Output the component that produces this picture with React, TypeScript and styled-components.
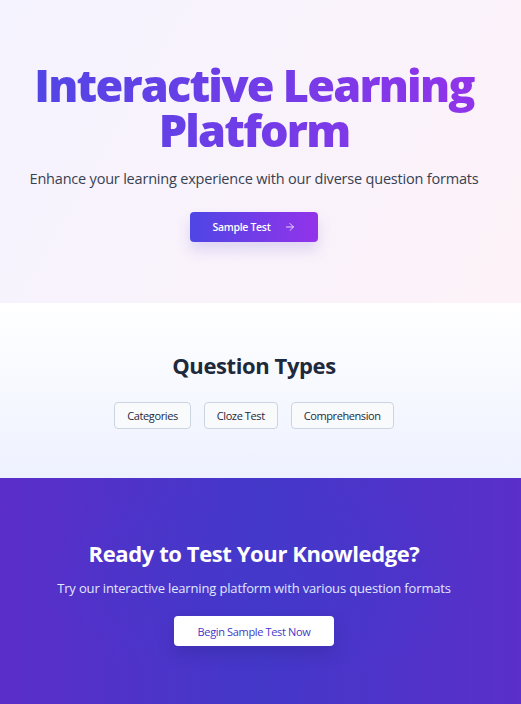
import React from "react";
import styled, { createGlobalStyle } from "styled-components";

const GlobalStyle = createGlobalStyle`
  * { box-sizing: border-box; }
  body {
    margin: 0;
    font-family: "Open Sans", "Noto Sans", sans-serif;
  }
`;

const QUESTION_TYPES = ["Categories", "Cloze Test", "Comprehension"];

const ArrowIcon = () => (
  <svg width="12" height="12" viewBox="0 0 24 24" fill="none" stroke="currentColor" strokeWidth="2" strokeLinecap="round" strokeLinejoin="round">
    <path d="M5 12h14" />
    <path d="m12 5 7 7-7 7" />
  </svg>
);

const App: React.FC = () => {
  return (
    <Page>
      <GlobalStyle />
      <Hero>
        <Title>Interactive Learning Platform</Title>
        <Lead>Enhance your learning experience with our diverse question formats</Lead>
        <PrimaryButton>
          Sample Test
          <ArrowIcon />
        </PrimaryButton>
      </Hero>
      <Types>
        <SectionTitle>Question Types</SectionTitle>
        <PillRow>
          {QUESTION_TYPES.map((t) => (
            <Pill key={t}>{t}</Pill>
          ))}
        </PillRow>
      </Types>
      <Cta>
        <CtaTitle>Ready to Test Your Knowledge?</CtaTitle>
        <CtaText>Try our interactive learning platform with various question formats</CtaText>
        <WhiteButton>Begin Sample Test Now</WhiteButton>
      </Cta>
    </Page>
  );
};

export default App;

const Page = styled.div`
  width: 100%;
  min-height: 704px;
  display: flex;
  flex-direction: column;
`;

// content is centred on the 508px left of where the scrollbar sat
const Section = styled.section`
  display: flex;
  flex-direction: column;
  align-items: center;
  padding-right: 13px;
`;

const Hero = styled(Section)`
  height: 303px;
  padding-top: 62px;
  background: linear-gradient(120deg, #f5f3ff 0%, #fdf2f8 100%);
`;

const Title = styled.h1`
  margin: 0;
  width: 480px;
  text-align: center;
  font-size: 45px;
  line-height: 45px;
  font-weight: 800;
  letter-spacing: -1.8px;
  background: linear-gradient(90deg, #4f46e5 0%, #9333ea 100%);
  -webkit-background-clip: text;
  background-clip: text;
  color: transparent;
`;

const Lead = styled.p`
  margin: 15px 0 0;
  font-size: 14.5px;
  line-height: 24px;
  letter-spacing: -0.2px;
  color: #374151;
`;

const PrimaryButton = styled.button`
  margin-top: 21px;
  width: 128px;
  height: 30px;
  display: flex;
  align-items: center;
  justify-content: center;
  gap: 13px;
  border: none;
  border-radius: 4px;
  font-family: inherit;
  font-size: 10.5px;
  font-weight: 600;
  letter-spacing: -0.3px;
  color: #ffffff;
  background: linear-gradient(90deg, #4f46e5 0%, #9333ea 100%);
  box-shadow: 0 8px 14px rgba(99, 80, 200, 0.18);

  svg {
    opacity: 0.8;
  }
`;

const Types = styled(Section)`
  height: 175px;
  padding-top: 47px;
  background: linear-gradient(180deg, #ffffff 0%, #eef2ff 100%);
`;

const SectionTitle = styled.h2`
  margin: 0;
  font-size: 22px;
  line-height: 30px;
  font-weight: 700;
  letter-spacing: -0.4px;
  color: #1e293b;
`;

const PillRow = styled.div`
  margin-top: 22px;
  display: flex;
  gap: 13px;
`;

const Pill = styled.span`
  height: 27px;
  padding: 0 12px;
  display: flex;
  align-items: center;
  border: 1px solid #cbd5e1;
  border-radius: 4px;
  background: #f8fafc;
  font-size: 11px;
  letter-spacing: -0.4px;
  color: #1e293b;
`;

const Cta = styled(Section)`
  flex: 1;
  min-height: 226px;
  padding-top: 60px;
  background:
    radial-gradient(ellipse at 50% 45%, rgba(67, 56, 202, 0.6) 0%, rgba(67, 56, 202, 0) 60%),
    linear-gradient(90deg, #5b2ec9 0%, #4438c9 50%, #5a2fca 100%);
`;

const CtaTitle = styled.h2`
  margin: 0;
  font-size: 22px;
  line-height: 30px;
  font-weight: 700;
  letter-spacing: -0.4px;
  color: #ffffff;
`;

const CtaText = styled.p`
  margin: 10px 0 0;
  font-size: 13px;
  line-height: 20px;
  letter-spacing: -0.15px;
  color: #e0e7ff;
`;

const WhiteButton = styled.button`
  margin-top: 18px;
  width: 160px;
  height: 30px;
  border: none;
  border-radius: 4px;
  background: #ffffff;
  font-family: inherit;
  font-size: 11px;
  letter-spacing: -0.35px;
  color: #4338ca;
  box-shadow: 0 8px 16px rgba(40, 30, 120, 0.25);
`;
